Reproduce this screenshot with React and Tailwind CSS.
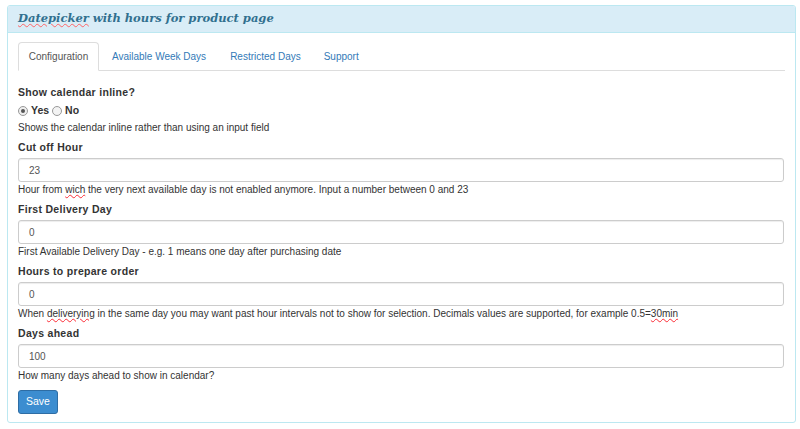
export default function App() {
  const fields = [
    ["Cut off Hour", "23", <>Hour from <span className="underline decoration-wavy decoration-red-500">wich</span> the very next available day is not enabled anymore. Input a number between 0 and 23</>],
    ["First Delivery Day", "0", "First Available Delivery Day - e.g. 1 means one day after purchasing date"],
    ["Hours to prepare order", "0", <>When <span className="underline decoration-wavy decoration-red-500">deliverying</span> in the same day you may want past hour intervals not to show for selection. Decimals values are supported, for example 0.5=<span className="underline decoration-wavy decoration-red-500">30min</span></>],
    ["Days ahead", "100", "How many days ahead to show in calendar?"],
  ];
  return (
    <div className="w-[800px] h-[429px] bg-white pt-[5px] px-[7px] text-[#333] text-[10px]" style={{ fontFamily: '"Liberation Sans", Arial, sans-serif' }}>
      <div className="w-[789px] h-[418px] border border-[#bce8f1] rounded-[3px] overflow-hidden">
        <div className="h-[27px] bg-[#d9edf7] border-b border-[#bce8f1] flex items-center px-[10px] text-[#31708f] font-bold italic text-[11.5px]" style={{ fontFamily: '"DejaVu Serif", serif' }}>
          <span className="underline decoration-wavy decoration-red-400 decoration-1">Datepicker</span>&nbsp;with hours for product page
        </div>
        <div className="px-[10px] pt-[9px]">
          <div className="flex border-b border-[#ddd] h-[29px] text-[10px]">
            <div className="w-[81px] h-[29px] border border-[#ddd] border-b-white rounded-t-[4px] bg-white flex items-center justify-center text-[#555] -mb-px">Configuration</div>
            <div className="px-[13px] flex items-center text-[#337ab7]">Available Week Days</div>
            <div className="px-[11px] flex items-center text-[#337ab7]">Restricted Days</div>
            <div className="px-[12px] flex items-center text-[#337ab7]">Support</div>
          </div>
          <div className="pt-[13px]">
            <div className="font-bold h-[16px] leading-[16px] text-[10.5px] tracking-[0.3px]">Show calendar inline?</div>
            <div className="flex items-center h-[20px] font-bold gap-[3px] mt-[1px] text-[10.5px]">
              <span className="w-[10px] h-[10px] rounded-full border border-[#999] bg-[#eee] flex items-center justify-center"><span className="w-[4px] h-[4px] rounded-full bg-[#555]" /></span>
              <span>Yes</span>
              <span className="w-[10px] h-[10px] rounded-full border border-[#999] bg-[#f3f3f3]" />
              <span>No</span>
            </div>
            <div className="h-[14px] leading-[14px]">Shows the calendar inline rather than using an input field</div>
            {fields.map(([l, v, h], i) => (
              <div key={i} className="mt-[4px]">
                <div className="font-bold h-[16px] leading-[16px] text-[10.5px] tracking-[0.3px]">{l}</div>
                <div className="mt-[3px] h-[24px] w-[766px] border border-[#ccc] rounded-[3px] flex items-center px-[10px] text-[#555] shadow-[inset_0_1px_1px_rgba(0,0,0,0.075)]">{v}</div>
                <div className="h-[14px] leading-[14px] mt-[1px]">{h}</div>
              </div>
            ))}
            <button className="mt-[7px] w-[40px] h-[24px] rounded-[3px] bg-[#3c8dd0] border border-[#2e6da4] text-white text-[10.5px]">Save</button>
          </div>
        </div>
      </div>
    </div>
  );
}
